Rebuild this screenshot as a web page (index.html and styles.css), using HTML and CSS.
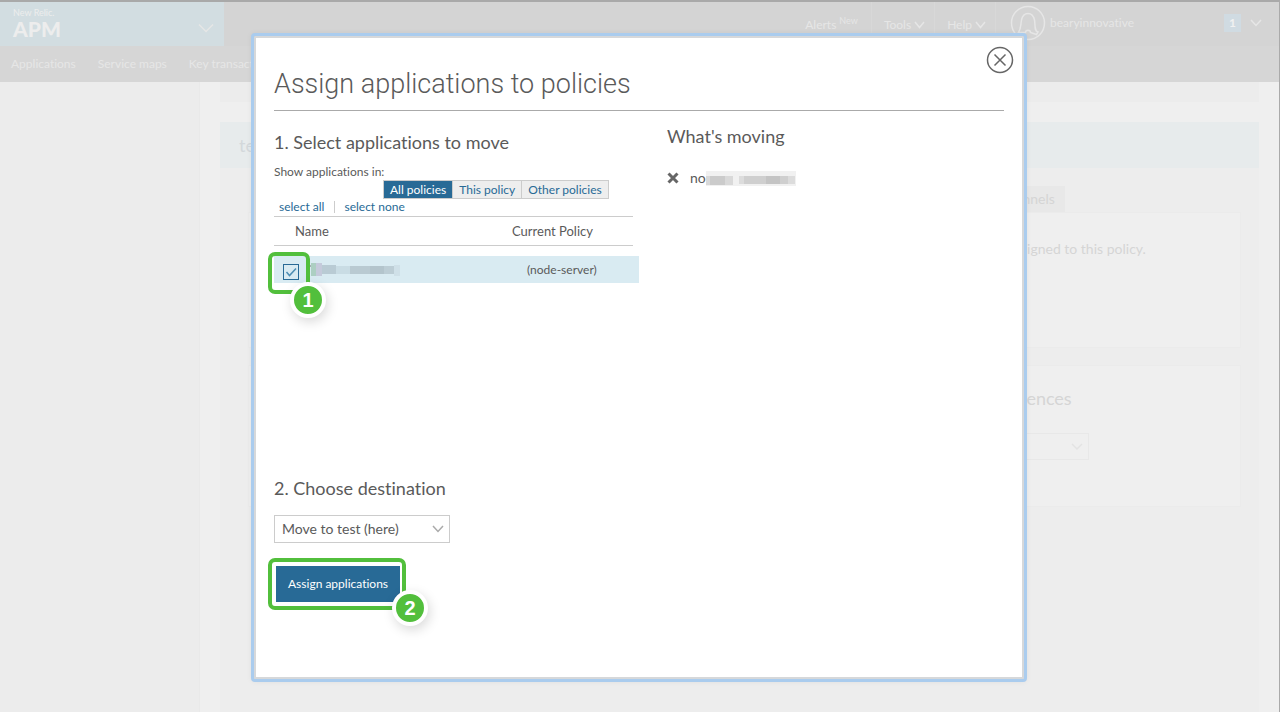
FILE: index.html
```html
<!DOCTYPE html>
<html lang="en">
<head>
<meta charset="utf-8">
<title>Assign applications to policies</title>
<link rel="stylesheet" href="styles.css">
</head>
<body>
<div class="app">
  <header class="topbar">
    <button class="brand" type="button">
      <span class="brand-text"><span class="brand-small">New Relic.</span><span class="brand-big">APM</span></span>
      <svg width="16" height="10" viewBox="0 0 16 10"><path d="M1 1.500 8 8.500 15 1.500" class="stroke"/></svg>
    </button>
    <nav class="tools">
      <a class="tool alerts" href="#">Alerts <sup>New</sup></a>
      <a class="tool" href="#">Tools <svg width="11" height="8" viewBox="0 0 11 8"><path d="M1 1 5.500 6.500 10 1" class="stroke"/></svg></a>
      <a class="tool" href="#">Help <svg width="11" height="8" viewBox="0 0 11 8"><path d="M1 1 5.500 6.500 10 1" class="stroke"/></svg></a>
    </nav>
    <a class="account" href="#">
      <svg width="36" height="36" viewBox="0 0 36 36"><circle cx="18" cy="18" r="16.500" class="stroke"/><path class="stroke" d="M15.500 27.500c0-3 5-3 5 0l6 2 1.500-2.500c-4-1.500-2.500-6-3.500-12C23.500 10.500 21 8.500 18 8.500S12.500 10.500 11.500 15c-1 6-.5 8.500-3 12.500z"/></svg>
      <span>bearyinnovative</span>
    </a>
    <button class="count" type="button"><span class="count-num">1</span>
      <svg width="12" height="8" viewBox="0 0 12 8"><path d="M1 1 6 6.500 11 1" class="stroke"/></svg></button>
  </header>
  <nav class="subnav">
    <a href="#">Applications</a><a href="#">Service maps</a><a href="#">Key transactions</a>
  </nav>
  <div class="page">
    <aside class="sidebar"></aside>
    <main class="content">
      <div class="strip"></div>
      <section class="panel">
        <h2 class="panel-title">test</h2>
        <div class="panel-body">
          <div class="tabs"><button class="tab" type="button">channels</button></div>
          <div class="card card-apps"><p>assigned to this policy.</p></div>
          <div class="card card-prefs">
            <h3>preferences</h3>
            <div class="fake-select"><svg width="12" height="8" viewBox="0 0 12 8"><path d="M1 1 6 6 11 1" class="stroke-dark"/></svg></div>
          </div>
        </div>
      </section>
    </main>
  </div>
</div>

<div class="overlay">
  <div class="dialog" role="dialog" aria-labelledby="dialog-title">
    <button class="close" type="button" aria-label="Close">
      <svg width="28" height="28" viewBox="0 0 28 28"><circle cx="14" cy="14" r="12.500"/><path d="M8.500 8.500l11 11M19.500 8.500l-11 11"/></svg>
    </button>
    <h1 id="dialog-title">Assign applications to policies</h1>
    <div class="columns">
      <section class="pick">
        <h2>1. Select applications to move</h2>
        <p class="hint">Show applications in:</p>
        <div class="filters">
          <button class="filter active" type="button">All policies</button><button class="filter" type="button">This policy</button><button class="filter" type="button">Other policies</button>
        </div>
        <div class="links"><a href="#">select all</a><a href="#">select none</a></div>
        <table>
          <thead><tr><th class="col-name">Name</th><th class="col-policy">Current Policy</th><th class="col-end"></th></tr></thead>
          <tbody><tr>
            <td><div class="name-cell">
              <span class="check-wrap"><input type="checkbox" id="app" checked aria-label="Select application"><svg class="tick" width="16" height="16" viewBox="0 0 16 16"><path d="M3.500 8 6.500 11.500 13 4.500"/></svg><span class="mark"></span><span class="badge badge-one">1</span></span>
              <svg class="redacted" width="92" height="13" viewBox="0 0 92 13"><path d="M0 3h3" stroke="#777"/><path fill="#accfc2" d="M2 0h5v13H2z"/><path fill="#c5cadb" d="M7 0h6v13H7z"/><path fill="#b9cbd4" d="M13 2h14v9H13z"/><path fill="#c9dce4" d="M27 3h14v8H27z"/><path fill="#b9cad2" d="M41 3h20v8H41z"/><path fill="#b3c4cc" d="M61 3h14v8H61z"/><path fill="#bccdd5" d="M75 3h10v8H75z"/><path fill="#cfe0e8" d="M85 2h6v11h-6z"/></svg>
            </div></td>
            <td class="policy">(node-server)</td><td></td>
          </tr></tbody>
        </table>
        <h2 class="destination"><label for="dest">2. Choose destination</label></h2>
        <div class="select-wrap">
          <select id="dest"><option>Move to test (here)</option></select>
          <svg width="12" height="8" viewBox="0 0 12 8"><path d="M1 1 6 6.500 11 1"/></svg>
        </div>
        <div class="assign-wrap"><button class="assign" type="button">Assign applications</button><span class="badge badge-two">2</span></div>
      </section>
      <section class="moving">
        <h2>What's moving</h2>
        <div class="moving-item">
          <button class="remove" type="button" aria-label="Remove"><svg width="12" height="12" viewBox="0 0 12 12"><path d="M1.500 1.500l9 9M10.500 1.500l-9 9"/></svg></button>
          <span>no</span><svg width="90" height="15" viewBox="0 0 90 15"><path fill="#f1f1f1" d="M0 0h90v15H0z"/><path fill="#d9d9d9" d="M0 5h27v9H0z"/><path fill="#cbcbcb" d="M4 5h15v9H4z"/><path fill="#dcdcdc" d="M33 5h56v8H33z"/><path fill="#cfcfcf" d="M38 5h44v8H38z"/><path fill="#c4c4c4" d="M60 5h14v8H60z"/></svg>
        </div>
      </section>
    </div>
  </div>
</div>
</body>
</html>
```
FILE: styles.css
```css
* { box-sizing: border-box; }
body { position: relative; margin: 0; background: #fff; color: #5a5a5a; font: 14px/18px Lato, "Open Sans", sans-serif; font-variant-ligatures: none; }
h1, h2, h3, p { margin: 0; font-weight: 400; }
button { font: inherit; color: inherit; border: 0; background: none; padding: 0; }
a { text-decoration: none; color: inherit; }
svg { display: block; flex: none; }
.stroke { fill: none; stroke: #e6e6e6; stroke-width: 1.5; }
.stroke-dark { fill: none; stroke: #e3e3e3; stroke-width: 1.5; }

.app { display: flex; flex-direction: column; height: calc(100vh - 2px); border-top: 2px solid #a9a9a9; border-right: 1px solid #aaa; background: #ededed; overflow: hidden; }
.topbar { display: flex; flex: none; height: 44px; background: #d4d4d4; color: #e6e6e6; font-size: 12px; }
.brand { display: flex; align-items: center; justify-content: space-between; width: 224px; padding: 4px 10px 0 13px; background: #d2dde1; color: #ededed; text-align: left; }
.brand svg { margin-top: 4px; }
.brand-text { display: flex; flex-direction: column; margin-bottom: 4px; }
.brand-small { font-size: 9px; line-height: 10px; }
.brand-big { font-size: 21px; font-weight: 900; line-height: 22px; }
.tools { display: flex; margin-left: auto; }
.tool { display: flex; align-items: center; gap: 3px; padding: 2px 9px 0 12px; border-right: 1px solid #d8d8d8; }
.tool sup { align-self: flex-start; margin-top: 12px; font-size: 9px; line-height: 9px; vertical-align: baseline; }
.alerts { padding-right: 13px; }
.account { display: flex; align-items: center; gap: 4px; padding: 0 90px 2px 14px; }
.count { display: flex; align-items: center; gap: 9px; padding: 0 17px 2px 0; }
.count-num { width: 17px; background: #d0dbe2; color: #f1f1f1; font-weight: 700; text-align: center; }
.subnav { display: flex; flex: none; gap: 22px; height: 36px; padding: 9px 11px; background: #d6d6d6; color: #e6e6e6; font-size: 12px; }

.page { display: flex; flex: 1; }
.sidebar { width: 200px; flex: none; background: #ececec; border-right: 1px solid #e9e9e9; }
.content { display: flex; flex: 1; flex-direction: column; padding: 0 20px; background: #efefef; }
.strip { height: 20px; margin-bottom: 20px; background: #ececec; }
.panel { flex: 1; background: #ededed; }
.panel-title { height: 46px; padding-left: 19px; background: #e7ebec; color: #d3d8db; font-size: 18px; line-height: 46px; }
.panel-body { padding: 18px 18px 0 28px; color: #d5d5d5; }
.tabs { display: flex; padding-left: 743px; }
.tab { padding: 4px 10px; background: #e8e8e8; }
.card { border: 1px solid #ebebeb; background: #efefef; }
.card-apps { height: 136px; margin-bottom: 17px; padding: 27px 0 0 759px; }
.card-prefs { height: 142px; padding: 20px 0 0 730px; }
.card-prefs h3 { margin-bottom: 23px; font-size: 18px; line-height: 24px; }
.fake-select { display: flex; align-items: center; justify-content: flex-end; width: 110px; height: 27px; padding-right: 5px; border: 1px solid #e8e8e8; }

.overlay { position: absolute; top: 0; right: 0; left: 0; display: flex; justify-content: center; padding: 36px 24px 36px 22px; }
.dialog { position: relative; width: 100%; max-width: 770px; padding: 28px 18px 67px; border: 2px solid #d6d8da; border-radius: 1px; outline: 3px solid #aaccee; background: #fff; box-shadow: 0 0 6px 2px rgba(0, 0, 0, .08); }
.close { position: absolute; top: 8px; right: 8px; }
.close svg, .remove svg, .select-wrap svg { fill: none; stroke: #666; stroke-width: 1.5; }
.dialog h1 { padding-bottom: 8px; border-bottom: 1px solid #aaa; font-family: Roboto, Lato, sans-serif; font-size: 27px; font-weight: 300; line-height: 36px; }
.dialog h2 { font-size: 18px; line-height: 24px; }
.columns { display: grid; grid-template-columns: 365px 1fr; gap: 28px; }
.pick { padding-top: 19px; }
.hint { margin-top: 9px; font-size: 12px; }
.filters { display: flex; margin: -1px 0 0 109px; }
.filter { height: 19px; margin-right: -1px; padding: 0 6px; border: 1px solid #ccc; background: #eee; color: #286a96; font-size: 12px; line-height: 17px; white-space: nowrap; }
.filter.active { background: #286a96; color: #fff; }
.links { display: flex; margin: 2px 0 3px; color: #286a96; font-size: 12px; line-height: 12px; }
.links a { padding: 0 10px 0 5px; }
.links a + a { padding-left: 9px; border-left: 1px solid #ccc; }
table { width: 100%; border-collapse: collapse; table-layout: fixed; }
th { height: 29px; padding: 0; border-top: 1px solid #ccc; border-bottom: 1px solid #ccc; font-size: 13px; font-weight: 400; text-align: left; }
.col-name { width: 238px; padding-left: 21px; }
.col-end { width: 6px; border: 0; }
tbody::before { display: block; height: 10px; content: ""; }
td { height: 27px; padding: 0; background: #d9ebf2; }
.policy { padding-left: 15px; font-size: 12px; }
.name-cell { display: flex; align-items: center; gap: 10px; padding-left: 9px; }
.check-wrap { position: relative; display: flex; margin-top: 5px; }
.check-wrap input { width: 16px; height: 16px; margin: 0; appearance: none; border: 1px solid #286a96; }
.tick { position: absolute; top: 0; left: 0; fill: none; stroke: #4d8db3; stroke-width: 1.5; pointer-events: none; }
.mark { position: absolute; top: -12px; left: -15px; width: 42px; height: 42px; border: 4px solid #52bf3c; border-radius: 7px; }
.badge { position: absolute; z-index: 1; width: 36px; height: 36px; border: 4px solid #fff; border-radius: 50%; background: #52bf3c; color: #fff; box-shadow: 2px 4px 12px rgba(0, 0, 0, .15); font: 700 20px/28px "Liberation Sans", sans-serif; text-align: center; }
.badge-one { top: 18px; left: 7px; }
.destination { margin-top: 193px; }
.select-wrap { position: relative; width: 176px; margin-top: 15px; }
.select-wrap select { width: 100%; height: 28px; padding: 0 7px; appearance: none; border: 1px solid #ccc; border-radius: 0; background: #fff; color: #5a5a5a; font: inherit; }
.select-wrap svg { position: absolute; top: 10px; right: 6px; stroke: #aaa; pointer-events: none; }
.assign-wrap { position: relative; width: max-content; margin: 15px 0 0 -6px; padding: 4px 2px 4px 4px; border: 4px solid #52bf3c; border-radius: 7px; }
.assign { display: block; height: 36px; padding: 0 12px; background: #286a96; color: #fff; font-size: 12px; }
.badge-two { right: -26px; bottom: -20px; }
.moving { padding-top: 13px; }
.moving-item { display: flex; align-items: center; margin-top: 21px; }
.remove { margin-right: 11px; }
.remove svg { stroke-width: 3; }
```
